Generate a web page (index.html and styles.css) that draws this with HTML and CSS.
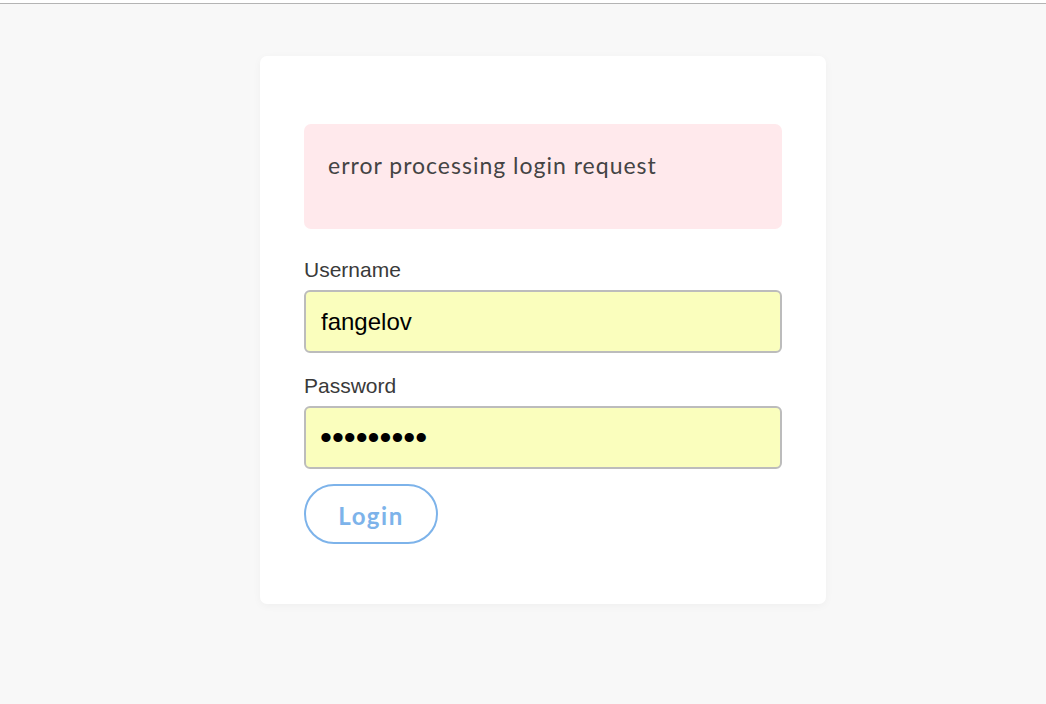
FILE: index.html
```html
<!DOCTYPE html>
<html>
<head>
<meta charset="utf-8">
<link rel="stylesheet" href="styles.css">
</head>
<body>
<div class="topbar"></div>
<div class="card">
  <div class="error">error processing login request</div>
  <form class="form">
    <label class="label" for="u">Username</label>
    <input class="input" id="u" type="text" value="fangelov">
    <label class="label label-pw" for="p">Password</label>
    <input class="input input-pw" id="p" type="password" value="123456789">
    <button class="btn" type="button">Login</button>
  </form>
</div>
</body>
</html>
```
FILE: styles.css
```css
html, body {
  margin: 0;
  padding: 0;
}
body {
  background: #f8f8f8;
  min-height: 704px;
}
.topbar {
  height: 3px;
  background: #ffffff;
  border-bottom: 1px solid #b4b4b4;
}
.card {
  width: 566px;
  box-sizing: border-box;
  margin: 52px 0 0 260px;
  padding: 68px 44px 60px;
  background: #ffffff;
  border-radius: 7px;
  box-shadow: 0 2px 8px rgba(0,0,0,0.04);
}
.error {
  height: 105px;
  box-sizing: border-box;
  padding: 26px 24px 0;
  background: #ffe9ec;
  border-radius: 7px;
  color: #444444;
  font-family: "Lato", "Noto Sans", sans-serif;
  font-size: 23px;
  letter-spacing: 1px;
  line-height: 30px;
}
.form {
  display: flex;
  flex-direction: column;
  align-items: flex-start;
  margin: 0;
}
.label {
  display: block;
  margin-top: 29px;
  margin-bottom: 8px;
  font-family: "Liberation Sans", Arial, sans-serif;
  font-size: 21px;
  line-height: 24px;
  color: #3a3a3a;
}
.label-pw {
  margin-top: 21px;
}
.input {
  width: 478px;
  height: 63px;
  box-sizing: border-box;
  margin: 0;
  padding: 0 15px;
  border: 2px solid #bcbcbc;
  border-radius: 6px;
  background: #fafebd;
  font-family: "Liberation Sans", Arial, sans-serif;
  font-size: 24px;
  color: #000000;
  outline: none;
}
.input-pw {
  font-size: 34px;
  padding-left: 14px;
}
.btn {
  margin-top: 15px;
  width: 134px;
  height: 60px;
  box-sizing: border-box;
  border: 2px solid #7db3ea;
  border-radius: 30px;
  background: #ffffff;
  color: #7db3ea;
  font-family: "Lato", "Noto Sans", sans-serif;
  font-weight: 700;
  font-size: 24px;
  letter-spacing: 1.5px;
  padding: 2px 0 0;
  cursor: pointer;
}
```
